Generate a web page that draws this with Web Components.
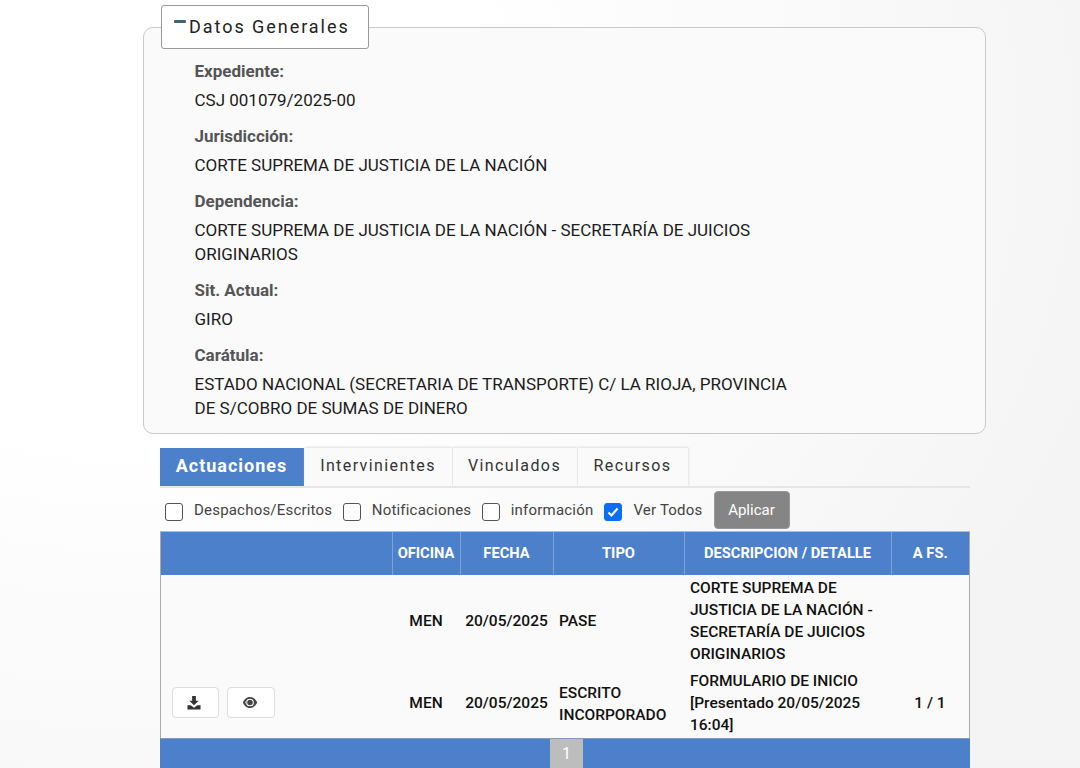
<!DOCTYPE html>
<html lang="es"><head><meta charset="utf-8"><title>Expediente</title>
<style>
html,body{margin:0;height:768px;overflow:hidden}
body{background:radial-gradient(ellipse 1050px 850px at 12% 18%,#fff 35%,#f4f4f4 100%);font-family:Roboto,"Liberation Sans",sans-serif;color:#111}
exp-page{display:block;margin-left:143px;width:843px;padding-top:5px}
</style></head><body>
<exp-page>
  <general-data>
    <data-field label="Expediente:">CSJ 001079/2025-00</data-field>
    <data-field label="Jurisdicción:">CORTE SUPREMA DE JUSTICIA DE LA NACIÓN</data-field>
    <data-field label="Dependencia:">CORTE SUPREMA DE JUSTICIA DE LA NACIÓN - SECRETARÍA DE JUICIOS ORIGINARIOS</data-field>
    <data-field label="Sit. Actual:">GIRO</data-field>
    <data-field label="Carátula:">ESTADO NACIONAL (SECRETARIA DE TRANSPORTE) C/ LA RIOJA, PROVINCIA DE S/COBRO DE SUMAS DE DINERO</data-field>
  </general-data>
  <case-tabs></case-tabs>
  <filter-bar></filter-bar>
  <acts-table></acts-table>
</exp-page>
<script>
const def=(name,html)=>customElements.define(name,class extends HTMLElement{
  connectedCallback(){ if(this.shadowRoot)return; this.attachShadow({mode:'open'}).innerHTML=html(this); }
});
def('general-data',()=>`<style>
:host{display:block}
fieldset{margin:0;padding:10px 50px 0 50.500px;border:1px solid #c9c9c9;border-radius:10px;background:#fafafa;box-sizing:border-box;min-width:0;height:429px}
legend{margin-left:-33.500px;padding:0 0 2px 12px;box-sizing:border-box;width:208px;height:44px;background:#fff;border:1px solid #999;border-radius:3px;font-size:18px;letter-spacing:1.95px;color:#222;display:flex;align-items:center}
.m{width:12px;height:3px;background:#3f6478;border-radius:1px;margin:-10px 3px 0 0;flex:none}
</style><fieldset><legend><span class="m"></span>Datos Generales</legend><slot></slot></fieldset>`);
def('data-field',h=>`<style>
:host{display:block;font-size:17px;line-height:24px;margin-bottom:12px;width:600px;color:#1c1c1c}
b{display:block;font-weight:700;font-size:17px;color:#555;margin-bottom:5px}
</style><b>${h.getAttribute('label')}</b><slot></slot>`);
def('case-tabs',()=>`<style>
:host{display:flex;margin:14px 16px 0 17px;border-bottom:2px solid #e6e6e6;gap:1px;height:38px}
span{display:flex;align-items:center;justify-content:center;box-sizing:border-box;height:38px;padding:0 1px 4px 0;font-size:16px;letter-spacing:1.4px;color:#333;background:#fafafa;box-shadow:0 -1px 2px #e2e2e2,1px 0 2px #e8e8e8}
.a{width:144px;background:#4d80cb;color:#fff;font-weight:700;font-size:18px;letter-spacing:1px;box-shadow:none}
</style><span class="a">Actuaciones</span><span style="width:147px">Intervinientes</span><span style="width:124px">Vinculados</span><span style="width:110px">Recursos</span>`);
def('filter-bar',()=>`<style>
:host{display:flex;align-items:center;height:43px;margin:0 16px 0 17px;padding-left:5px;font-size:15px;letter-spacing:.2px;color:#444}
i{display:block;box-sizing:border-box;width:18px;height:18px;border:1px solid #555;border-radius:3px;background:#fff;margin-top:4px;flex:none}
i.c{background:#0b6ef5;border-color:#0b6ef5;display:flex}
svg{width:16px;height:16px}
span{margin:0 11px}
span.n{margin:0 10.500px}
button{font:inherit;font-size:15px;letter-spacing:0;color:#fff;background:#858585;border:1px solid #999;border-radius:4px;width:76px;height:38px;padding:0 2px 0 0;margin-left:1px}
</style><i></i><span>Despachos/Escritos</span><i></i><span class="n">Notificaciones</span><i></i><span>información</span><i class="c"><svg viewBox="0 0 16 16"><path d="M3.5 8.500l3 3 6-7" fill="none" stroke="#fff" stroke-width="2.200"/></svg></i><span>Ver Todos</span><button>Aplicar</button>`);
const dl=`<svg width="16" height="14" viewBox="0 0 16 15"><path fill="#333" d="M6 0h4v5h3L8 10 3 5h3zM1 10h3.500L8 12.500 11.500 10H15v4.500H1z"/></svg>`;
const eye=`<svg width="16" height="11" viewBox="0 0 16 12"><path fill="#444" fill-rule="evenodd" d="M8 0C4 0 1.500 3 .2 6 1.500 9 4 12 8 12s6.500-3 7.800-6C14.500 3 12 0 8 0zm0 1.800A4.200 4.200 0 1 1 8 10.200 4.200 4.200 0 0 1 8 1.800z"/><circle cx="8" cy="6" r="3" fill="#444"/><path d="M2.500 6C3.500 4 5 2.800 6 2.400 5 3.300 4.300 4.500 4.300 6S5 8.700 6 9.600C5 9.200 3.500 8 2.500 6z" fill="#bbb"/></svg>`;
def('acts-table',()=>`<style>
:host{display:block;margin:0 16px 0 17px;width:810px;border:1px solid #aaa;border-top-color:#bbb;box-sizing:border-box}
table{border-collapse:collapse;table-layout:fixed;width:808px;font-size:15.500px;line-height:22px;font-weight:500;color:#111}
th{background:#4d80cb;color:#fff;font-size:14.700px;font-weight:700;height:43px;padding:0 0 2px;box-sizing:border-box;border-left:1px solid #7da3dc}
th:first-child{border-left:0}
td{padding:1px 5px 3px 6px;text-align:left;background:#fafafa}
td.c{text-align:center;padding:0 5px 2px}
.r1 td{height:93px;box-sizing:border-box}
.r2 td{padding-top:1px;padding-bottom:0;height:70px;box-sizing:border-box}
.r2 td.c{padding-top:0;padding-bottom:1px}
.r2 td.d{padding-top:0;padding-bottom:1px}
.r2 td.pad{padding:0 0 1px 11px}
.btn{display:inline-flex;align-items:center;justify-content:center;box-sizing:border-box;height:31px;padding-right:3px;background:#fff;border:1px solid #ddd;border-radius:4px;vertical-align:middle}
.foot{background:#4d80cb;height:40px;border-top:1px solid #8199bd;box-sizing:border-box;margin:0 -1px;padding-left:390px}
.pg{display:block;width:33px;height:40px;background:#bdbdbd;color:#fff;font-size:16px;text-align:center;line-height:30px;font-weight:400}
</style>
<table><colgroup><col style="width:231px"><col style="width:68px"><col style="width:93px"><col style="width:131px"><col style="width:207px"><col></colgroup>
<thead><tr><th></th><th>OFICINA</th><th>FECHA</th><th>TIPO</th><th>DESCRIPCION / DETALLE</th><th>A FS.</th></tr></thead>
<tbody><tr class="r1"><td></td><td class="c">MEN</td><td class="c">20/05/2025</td><td>PASE</td><td>CORTE SUPREMA DE JUSTICIA DE LA NACIÓN - SECRETARÍA DE JUICIOS ORIGINARIOS</td><td></td></tr>
<tr class="r2"><td class="pad"><span class="btn" style="width:47px;margin-right:8px">${dl}</span><span class="btn" style="width:48px">${eye}</span></td><td class="c">MEN</td><td class="c">20/05/2025</td><td>ESCRITO INCORPORADO</td><td class="d">FORMULARIO DE INICIO [Presentado 20/05/2025 16:04]</td><td class="c">1 / 1</td></tr></tbody></table>
<div class="foot"><span class="pg">1</span></div>`);
</script>
</body></html>
